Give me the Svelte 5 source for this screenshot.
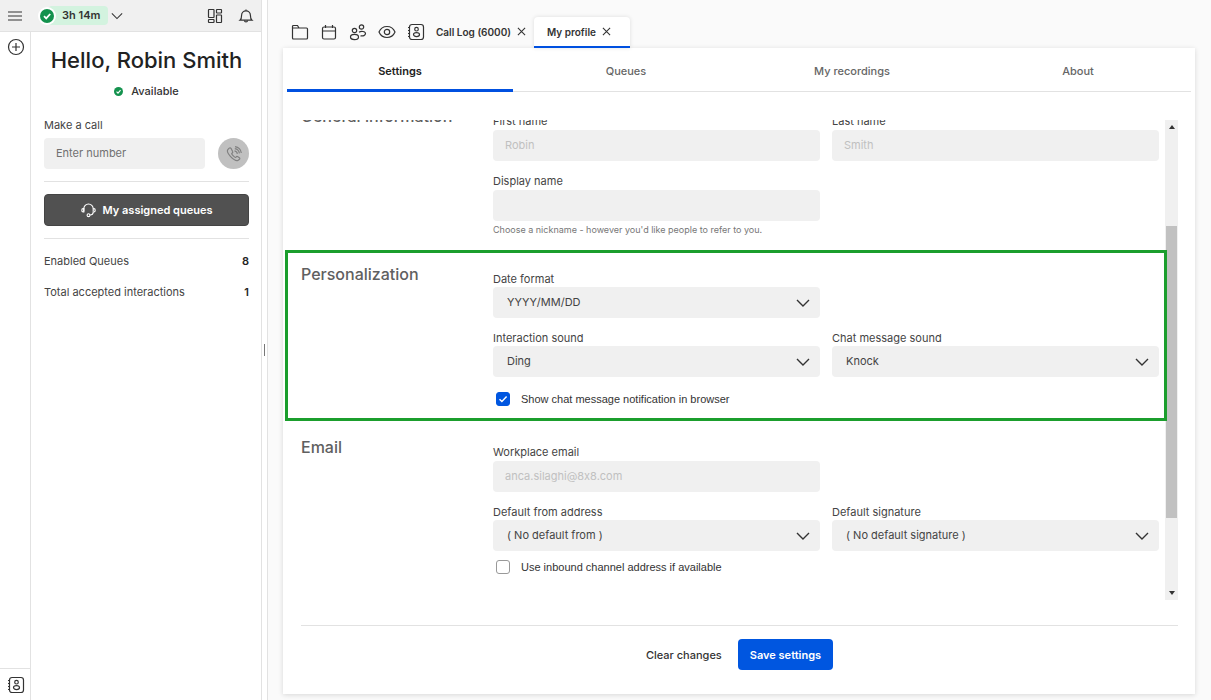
<script lang="ts">
	import { onMount } from 'svelte';

	const pages = ['Settings', 'Queues', 'My recordings', 'About'];
	const stats = [
		{ label: 'Enabled Queues', value: 8 },
		{ label: 'Total accepted interactions', value: 1 }
	];

	let page = $state('Settings');
	let scroller: HTMLDivElement;
	let thumbHeight = $state(60);
	let thumbTop = $state(30);

	function updateThumb() {
		const { scrollTop, scrollHeight, clientHeight } = scroller;
		thumbHeight = Math.min(100, (clientHeight / scrollHeight) * 100);
		thumbTop = (scrollTop / scrollHeight) * 100;
	}

	onMount(() => {
		scroller.scrollTop = 155;
		updateThumb();
	});
</script>

<svelte:window onresize={updateThumb} />

{#snippet contacts()}
	<svg class="icon" viewBox="0 0 18 18">
		<rect x="2.5" y="1.5" width="14" height="15" rx="2.5" />
		<circle cx="9.5" cy="6.2" r="1.8" />
		<ellipse cx="9.5" cy="11.6" rx="3" ry="2" />
		<path d="M1 4.5h2M1 7.5h2M1 10.5h2M1 13.5h2" />
	</svg>
{/snippet}

{#snippet cross()}
	<svg class="cross" viewBox="0 0 10 10"><path d="M1 1l8 8M9 1l-8 8" /></svg>
{/snippet}

{#snippet tick()}
	<svg class="tick" viewBox="0 0 14 14">
		<circle cx="7" cy="7" r="7" />
		<path d="M4 7.2l2.2 2.2L10.2 5" />
	</svg>
{/snippet}

{#snippet dropdown(id: string, label: string, value: string)}
	<div class="field">
		<label for={id}>{label}</label>
		<div class="select">
			<select {id}><option>{value}</option></select>
			<svg class="chevron" viewBox="0 0 14 8"><path d="M1 1l6 6 6-6" /></svg>
		</div>
	</div>
{/snippet}

{#snippet textbox(id: string, label: string, value: string, disabled: boolean)}
	<div class="field">
		<label for={id}>{label}</label>
		<input class="text" type="text" {id} {value} {disabled} />
	</div>
{/snippet}

{#snippet checkbox(label: string, checked: boolean)}
	<label class="check">
		<span class="box">
			<input type="checkbox" {checked} />
			<svg viewBox="0 0 14 14"><path d="M3.5 7.2l2.4 2.4 4.7-5" /></svg>
		</span>
		{label}
	</label>
{/snippet}

<div class="app">
	<aside class="sidebar">
		<header class="topbar">
			<button aria-label="Menu">
				<svg class="menu" viewBox="0 0 14 10"><path d="M0 1h14M0 5h14M0 9h14" /></svg>
			</button>
			<button class="status">
				<span class="badge">{@render tick()}</span>
				<span class="time">3h 14m</span>
				<svg class="chevron small" viewBox="0 0 14 8"><path d="M1 1l6 6 6-6" /></svg>
			</button>
			<button class="apps" aria-label="Apps">
				<svg class="icon" viewBox="0 0 18 18">
					<rect x="2.5" y="2.5" width="5.5" height="8" rx="0.5" />
					<rect x="10.5" y="2.5" width="5" height="3.5" rx="0.5" />
					<rect x="10.5" y="8" width="5" height="7.5" rx="0.5" />
					<rect x="2.5" y="12.5" width="5.5" height="3" rx="0.5" />
				</svg>
			</button>
			<button aria-label="Notifications">
				<svg class="icon" viewBox="0 0 18 18">
					<path d="M3 13.2c1.4-1.2 1.6-2.4 1.6-5a4.4 4.4 0 0 1 8.8 0c0 2.6.2 3.8 1.6 5z" />
					<path d="M9 3.8V2.5M7.5 13.4a1.5 1.5 0 0 0 3 0" />
				</svg>
			</button>
		</header>

		<div class="columns">
			<nav class="rail">
				<button aria-label="Add">
					<svg class="icon" viewBox="0 0 18 18">
						<circle cx="9" cy="9" r="7.5" />
						<path d="M9 5v8M5 9h8" />
					</svg>
				</button>
				<button class="bottom" aria-label="Contacts">{@render contacts()}</button>
			</nav>

			<section class="panel">
				<h1>Hello, Robin Smith</h1>
				<p class="presence">{@render tick()} Available</p>

				<label for="number">Make a call</label>
				<div class="dial">
					<input id="number" class="text" type="tel" placeholder="Enter number" />
					<button class="call" aria-label="Call">
						<svg class="icon" viewBox="0 0 18 18">
							<path
								d="M4.2 3.2 2.8 4.7c-.8 1-.2 3.6 2.6 6.7 3 3.2 6 4.6 7.5 4.1l1.6-1.3c.5-.5.4-1-.1-1.400l-1.900-1.200c-.5-.3-1-.2-1.300.2l-.6.7c-.8.2-4-3-3.900-4l.8-.7c.4-.4.4-.8.1-1.300L6 3.300c-.5-.6-1.200-.7-1.800-.1z"
							/>
							<path d="M9.5 5.800a3.500 3.500 0 0 1 2.900 3M9.800 3.700a5.500 5.500 0 0 1 4.600 4.700M10 1.600a7.500 7.500 0 0 1 6.300 6.400" />
						</svg>
					</button>
				</div>

				<hr />
				<button class="queues">
					<svg class="icon" viewBox="1 2 16 16">
						<path d="M4 11V8a5 5 0 0 1 10 0v3" />
						<path d="M4 8h-.8c-1.800 0-1.800 3.600 0 3.600H4zM14 8h.8c1.800 0 1.800 3.600 0 3.600H14c0 2.200-1.200 3.200-3.500 3.200" />
						<circle cx="9" cy="15" r="1.5" />
					</svg>
					My assigned queues
				</button>
				<hr />

				<dl>
					{#each stats as { label, value }}
						<div>
							<dt>{label}</dt>
							<dd>{value}</dd>
						</div>
					{/each}
				</dl>
			</section>
		</div>
	</aside>

	<div class="splitter"><span></span></div>

	<main>
		<nav class="workspace">
			<button aria-label="Files">
				<svg class="icon" viewBox="0 0 18 18">
					<path d="M1.5 15V3.5a1 1 0 0 1 1-1h4l1.5 2.500h7.500a1 1 0 0 1 1 1v9a1 1 0 0 1-1 1h-13a1 1 0 0 1-1-1zM1.500 5H8" />
				</svg>
			</button>
			<button aria-label="Calendar">
				<svg class="icon" viewBox="0 0 18 18">
					<rect x="2.5" y="4" width="13" height="12" rx="1.5" />
					<path d="M2.5 8h13M5.500 2v3M12.500 2v3" />
				</svg>
			</button>
			<button aria-label="People">
				<svg class="icon" viewBox="0 0 18 18">
					<circle cx="5.5" cy="7.5" r="2.2" />
					<circle cx="12.500" cy="4" r="2.200" />
					<ellipse cx="5.5" cy="14" rx="4" ry="2.6" />
					<path d="M10 9.200c2-1.400 6.500-1 6.500 1.400 0 2-2.500 2.600-5 2.200" />
				</svg>
			</button>
			<button aria-label="Watch">
				<svg class="icon" viewBox="0 0 18 18">
					<path d="M1 9c1.500-3.500 4.500-5.500 8-5.500S15.500 5.500 17 9c-1.500 3.500-4.500 5.500-8 5.500S2.500 12.500 1 9z" />
					<circle cx="9" cy="9" r="2.7" />
				</svg>
			</button>
			<button aria-label="Contacts">{@render contacts()}</button>
			<div class="tab">
				<a href="#call-log">Call Log (6000)</a>
				<button aria-label="Close Call Log">{@render cross()}</button>
			</div>
			<div class="tab current">
				<a href="#profile">My profile</a>
				<button aria-label="Close My profile">{@render cross()}</button>
			</div>
		</nav>

		<div class="card">
			<div class="pages" role="tablist">
				{#each pages as name}
					<button role="tab" aria-selected={page === name} onclick={() => (page = name)}>{name}</button>
				{/each}
			</div>

			<form>
				<div class="viewport">
					<div class="track">
						<svg viewBox="0 0 6 4"><path d="M0 4l3-4 3 4z" /></svg>
						<div class="lane">
							<div class="thumb" style="top: {thumbTop}%; height: {thumbHeight}%"></div>
						</div>
						<svg viewBox="0 0 6 4"><path d="M0 0l3 4 3-4z" /></svg>
					</div>

					<div class="scroller" bind:this={scroller} onscroll={updateThumb}>
						<section class="group">
							<h2>General information</h2>
							<div class="fields">
								{@render textbox('first', 'First name', 'Robin', true)}
								{@render textbox('last', 'Last name', 'Smith', true)}
								<div>
									{@render textbox('display', 'Display name', '', false)}
									<p class="hint">Choose a nickname - however you'd like people to refer to you.</p>
								</div>
							</div>
						</section>

						<section class="group highlight">
							<h2>Personalization</h2>
							<div class="fields">
								<div class="wide">{@render dropdown('date', 'Date format', 'YYYY/MM/DD')}</div>
								{@render dropdown('interaction', 'Interaction sound', 'Ding')}
								{@render dropdown('chat', 'Chat message sound', 'Knock')}
								<div class="wide">{@render checkbox('Show chat message notification in browser', true)}</div>
							</div>
						</section>

						<section class="group">
							<h2>Email</h2>
							<div class="fields">
								<div class="wide">{@render textbox('email', 'Workplace email', 'anca.silaghi@8x8.com', true)}</div>
								{@render dropdown('from', 'Default from address', '( No default from )')}
								{@render dropdown('signature', 'Default signature', '( No default signature )')}
							</div>
							<div class="extra">{@render checkbox('Use inbound channel address if available', false)}</div>
						</section>
					</div>
				</div>

				<footer>
					<button type="reset">Clear changes</button>
					<button type="button" class="save">Save settings</button>
				</footer>
			</form>
		</div>
	</main>
</div>

<style>
	:global(body) {
		margin: 0;
		background: #fafafa;
	}

	.app,
	.app :global(*) {
		box-sizing: border-box;
	}

	.app {
		display: flex;
		height: 100vh;
		min-height: 480px;
		overflow: hidden;
		font: 11px/16px Inter, 'Liberation Sans', sans-serif;
		font-variant-ligatures: no-contextual;
		color: #444;
	}

	button {
		display: flex;
		align-items: center;
		justify-content: center;
		padding: 0;
		border: 0;
		background: none;
		font: inherit;
		font-variant-ligatures: inherit;
		color: #333;
		cursor: pointer;
	}

	svg {
		flex: none;
		fill: none;
		stroke: currentColor;
	}

	.icon {
		width: 18px;
		height: 18px;
		stroke-width: 1.2;
	}

	.chevron {
		width: 14px;
		height: 8px;
		color: #333;
		stroke-width: 1.4;

		&.small {
			width: 12px;
			stroke-width: 1.2;
		}
	}

	.cross {
		width: 9px;
		height: 9px;
		stroke-width: 1.2;
	}

	.tick {
		width: 14px;
		height: 14px;
		stroke: white;
		stroke-width: 1.8;

		& circle {
			fill: #14924e;
			stroke: none;
		}
	}

	.sidebar {
		display: flex;
		flex-direction: column;
		flex: none;
		width: 262px;
		background: white;
		border-right: 1px solid #e2e2e2;
	}

	.topbar {
		display: flex;
		align-items: center;
		gap: 13px;
		height: 32px;
		padding: 0 6px 0 8px;
		background: #f0f0f0;
		border-bottom: 1px solid #e2e2e2;
	}

	.menu {
		width: 14px;
		height: 10px;
		stroke-width: 1.2;
	}

	.status {
		margin-left: 3px;
	}

	.badge {
		display: flex;
		padding: 2px;
		border-radius: 50%;
		background: white;
		z-index: 1;
	}

	.time {
		margin: 0 3px 0 -8px;
		padding: 1px 8px 1px 14px;
		border-radius: 4px;
		background: #d3f3df;
		font-weight: 600;
		line-height: 17px;
	}

	.apps {
		margin-left: auto;
	}

	.columns {
		display: flex;
		flex: 1;
	}

	.rail {
		display: flex;
		flex-direction: column;
		width: 31px;
		border-right: 1px solid #e2e2e2;

		& button {
			height: 30px;
			padding-left: 1px;
		}

		& .bottom {
			margin-top: auto;
			height: 32px;
			border-top: 1px solid #e2e2e2;
		}
	}

	.panel {
		flex: 1;
		padding: 12px 12px 0 13px;
	}

	h1 {
		margin: 0;
		font-size: 22px;
		line-height: 32px;
		font-weight: 500;
		text-align: center;
		color: #222;
	}

	.presence {
		display: flex;
		align-items: center;
		justify-content: center;
		gap: 8px;
		margin: 7px 0 18px;
		font-weight: 500;
		color: #333;

		& .tick {
			width: 9px;
			height: 9px;
		}
	}

	.dial {
		display: flex;
		gap: 13px;
		margin-top: 5px;
	}

	.text,
	select {
		width: 100%;
		min-width: 0;
		height: 31px;
		padding: 0 12px 1px;
		border: 0;
		border-radius: 4px;
		background: #f0f0f0;
		font: inherit;
		font-variant-ligatures: inherit;
		color: #444;
	}

	.text:disabled {
		color: #c0c0c0;
	}

	.text::placeholder {
		color: #707070;
	}

	.call {
		flex: none;
		width: 31px;
		height: 31px;
		border-radius: 50%;
		background: #c0c0c0;
		color: #808080;
	}

	hr {
		margin: 12px 0;
		border: 0;
		border-top: 1px solid #e2e2e2;
	}

	.queues {
		width: 100%;
		height: 32px;
		gap: 7px;
		border: 1px solid #444;
		border-radius: 4px;
		background: #515151;
		font-weight: 600;
		color: white;

		& .icon {
			width: 15px;
			height: 15px;
		}
	}

	dl {
		margin: 14px 0 0;

		& div {
			display: flex;
			justify-content: space-between;
			margin-bottom: 15px;
		}
	}

	dd {
		margin: 0;
		font-weight: 600;
		color: #222;
	}

	.splitter {
		display: flex;
		align-items: center;
		justify-content: center;
		flex: none;
		width: 6px;
		background: white;
		border-right: 1px solid #e2e2e2;

		& span {
			width: 1px;
			height: 12px;
			background: #777;
		}
	}

	main {
		display: flex;
		flex-direction: column;
		flex: 1;
		min-width: 0;
		padding: 17px 16px 6px 15px;
	}

	.workspace {
		display: flex;
		align-items: flex-start;
		gap: 11px;
		height: 31px;
		padding-left: 8px;

		& button {
			height: 29px;
		}
	}

	.tab {
		display: flex;
		align-items: center;
		gap: 6px;
		height: 29px;
		font-size: 10px;
		font-weight: 600;

		& a {
			color: #333;
			text-decoration: none;
		}

		&.current {
			z-index: 1;
			height: 31px;
			margin-left: -3px;
			padding: 0 19px 0 13px;
			border-bottom: 2px solid #0050e0;
			border-radius: 4px 4px 0 0;
			background: white;
			box-shadow: 0 0 4px rgb(0 0 0 / 12%);
		}
	}

	.card {
		display: flex;
		flex-direction: column;
		flex: 1;
		min-height: 0;
		background: white;
		box-shadow: 0 1px 5px rgb(0 0 0 / 14%);
	}

	.pages {
		display: grid;
		grid-template-columns: repeat(4, 1fr);
		flex: none;
		height: 44px;
		margin: 0 4px;
		border-bottom: 1px solid #e2e2e2;

		& button {
			height: 44px;
			padding-top: 4px;
			border-bottom: 3px solid transparent;
			font-weight: 500;
			color: #666;
		}

		& button[aria-selected='true'] {
			border-color: #0050e0;
			font-weight: 600;
			color: #222;
		}
	}

	form {
		display: flex;
		flex-direction: column;
		flex: 1;
		min-height: 0;
		padding: 28px 17px 0 2px;
	}

	.viewport {
		position: relative;
		flex: 1;
		min-height: 0;
	}

	.track {
		position: absolute;
		top: 0;
		right: 0;
		bottom: 0;
		display: flex;
		flex-direction: column;
		align-items: center;
		width: 13px;
		padding: 5px 0;
		background: #f0f0f0;

		& svg {
			width: 6px;
			height: 4px;
			fill: #333;
			stroke: none;
		}
	}

	.lane {
		position: relative;
		flex: 1;
		align-self: stretch;
		margin: 3px 0;
	}

	.thumb {
		position: absolute;
		left: 1px;
		right: 1px;
		background: #c1c1c1;
	}

	.scroller {
		position: relative;
		height: 100%;
		padding: 127px 0;
		overflow-y: auto;
		scrollbar-width: none;
	}

	.group {
		display: grid;
		grid-template-columns: 192px 1fr;
		margin-right: 11px;
		padding: 11px 5px 9px 13px;
		border: 3px solid transparent;

		&.highlight {
			border-color: #1b9e2d;
		}

		&:last-child {
			padding-top: 13px;
		}
	}

	h2 {
		margin: 0;
		font-size: 16px;
		line-height: 20px;
		font-weight: 500;
		color: #606060;
	}

	.fields {
		display: grid;
		grid-template-columns: 1fr 1fr;
		gap: 12px;
		padding-top: 7px;
	}

	.wide {
		grid-column: 1 / -1;

		& .field {
			width: calc(50% - 6px);
		}
	}

	.field {
		display: flex;
		flex-direction: column;

		& .text {
			margin-top: 1px;
		}
	}

	.select {
		display: grid;
		align-items: center;

		& select {
			grid-area: 1 / 1;
			padding: 0 32px 2px 14px;
			appearance: none;
		}

		& svg {
			grid-area: 1 / 1;
			justify-self: end;
			margin-right: 10px;
			pointer-events: none;
		}
	}

	.hint {
		margin: 1px 0 0;
		font-size: 9px;
		color: #777;
	}

	.check {
		display: flex;
		align-items: center;
		gap: 11px;
		height: 20px;
		margin-left: 3px;
		font-family: 'Liberation Sans', Arial, sans-serif;
		color: #333;
	}

	.box {
		display: grid;

		& input {
			grid-area: 1 / 1;
			width: 14px;
			height: 14px;
			margin: 0;
			border: 1px solid #999;
			border-radius: 3px;
			background: white;
			appearance: none;
		}

		& input:checked {
			border-color: #0056e0;
			background: #0056e0;
		}

		& svg {
			grid-area: 1 / 1;
			width: 14px;
			height: 14px;
			color: white;
			stroke-width: 1.4;
			pointer-events: none;
		}
	}

	.extra {
		grid-column: 2;
		margin-top: 6px;
	}

	footer {
		display: flex;
		justify-content: center;
		gap: 16px;
		margin: 25px 0 0 16px;
		padding: 13px 0 24px;
		border-top: 1px solid #e2e2e2;

		& button {
			height: 31px;
			font-weight: 500;
		}

		& .save {
			padding: 0 12px;
			border-radius: 4px;
			background: #0056e0;
			font-weight: 600;
			color: white;
		}
	}
</style>
